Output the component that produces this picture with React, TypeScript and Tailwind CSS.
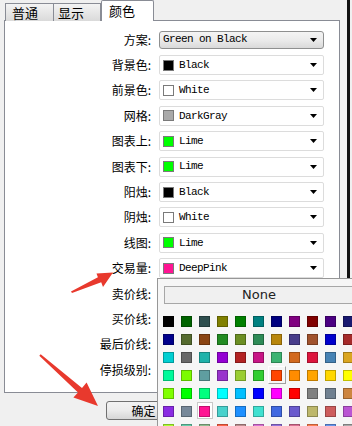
import React from "react";

const ROWS: { label: string; text: string; color?: string }[] = [
  { label: "方案", text: "Green on Black" },
  { label: "背景色", text: "Black", color: "#000000" },
  { label: "前景色", text: "White", color: "#ffffff" },
  { label: "网格", text: "DarkGray", color: "#a9a9a9" },
  { label: "图表上", text: "Lime", color: "#00ff00" },
  { label: "图表下", text: "Lime", color: "#00ff00" },
  { label: "阳烛", text: "Black", color: "#000000" },
  { label: "阴烛", text: "White", color: "#ffffff" },
  { label: "线图", text: "Lime", color: "#00ff00" },
  { label: "交易量", text: "DeepPink", color: "#ff1493" },
  { label: "卖价线", text: "Red", color: "#ff0000" },
  { label: "买价线", text: "Blue", color: "#0000ff" },
  { label: "最后价线", text: "Yellow", color: "#ffff00" },
  { label: "停损级别", text: "Gray", color: "#808080" },
];

// KnownColor palette, row by row
const SWATCHES = [
  ["#000000", "#006400", "#2F4F4F", "#808000", "#008000", "#008080", "#000080", "#800080", "#800000", "#4B0082", "#191970"],
  ["#00008B", "#556B2F", "#8B4513", "#228B22", "#6B8E23", "#2E8B57", "#B8860B", "#483D8B", "#A0522D", "#0000CD", "#A52A2A"],
  ["#00CED1", "#696969", "#20B2AA", "#9400D3", "#B22222", "#C71585", "#3CB371", "#D2691E", "#DC143C", "#4682B4", "#DAA520"],
  ["#00FA9A", "#7CFC00", "#5F9EA0", "#9932CC", "#9ACD32", "#32CD32", "#FF4500", "#FF8C00", "#FFA500", "#FFD700", "#FFFF00"],
  ["#7FFF00", "#00FF00", "#00FF7F", "#00FFFF", "#00BFFF", "#0000FF", "#FF00FF", "#FF0000", "#808080", "#708090", "#CD853F"],
  ["#8A2BE2", "#778899", "#FF1493", "#48D1CC", "#1E90FF", "#40E0D0", "#4169E1", "#6A5ACD", "#BDB76B", "#CD5C5C", "#BA55D3"],
  ["#ADFF2F", "#66CDAA", "#8FBC8F", "#FF6347", "#BC8F8F", "#DA70D6", "#9370DB", "#DB7093", "#FF7F50", "#6495ED", "#A9A9A9"],
];

function Arrow() {
  return (
    <svg width="7" height="4" viewBox="0 0 7 4" className="ml-auto mr-[6px] shrink-0">
      <polygon points="0,0 7,0 3.5,4" fill="#000" />
    </svg>
  );
}

function Combo({ text, color }: { text: string; color?: string }) {
  if (!color) {
    return (
      <div className="flex items-center w-[165px] h-[18px] rounded-[3px] border border-[#8e8f8f] bg-gradient-to-b from-[#f4f4f4] via-[#ebebeb] to-[#d9d9d9] pl-[3px]">
        <span className="font-['Liberation_Mono',monospace] text-[11px] tracking-[-0.6px] text-black">{text}</span>
        <Arrow />
      </div>
    );
  }
  return (
    <div className="flex items-center w-[165px] h-[20px] rounded-[2px] border border-[#dcdcdc] bg-white pl-[3px]">
      <div className="w-[11px] h-[11px] border border-[#7a7a7a] shrink-0" style={{ backgroundColor: color }} />
      <span className="ml-[5px] font-['Liberation_Mono',monospace] text-[11px] tracking-[-0.6px] text-black">{text}</span>
      <Arrow />
    </div>
  );
}

export default function App() {
  return (
    <div className="relative w-[352px] h-[426px] overflow-hidden bg-[#f0f0f0] font-['Noto_Sans_CJK_SC',sans-serif] text-black">
      <div className="flex h-full">
        {/* 主窗口 */}
        <div className="w-[340px] pl-[4px] flex flex-col">
          {/* 标签页 */}
          <div className="flex items-end h-[21px] -mb-px relative z-10 pl-[1px]">
            <div className="w-[49px] h-[18px] border border-b-0 border-[#898c95] bg-gradient-to-b from-[#f3f3f3] to-[#dadada] pl-[6px] text-[13px] leading-[17px]">
              普通
            </div>
            <div className="w-[47px] h-[18px] border border-b-0 border-l-0 border-[#898c95] bg-gradient-to-b from-[#f3f3f3] to-[#dadada] pl-[4px] text-[13px] leading-[17px]">
              显示
            </div>
            <div className="w-[53px] h-[21px] border border-b-0 border-[#898c95] rounded-t-[2px] bg-white pl-[7px] text-[13px] leading-[19px]">
              颜色
            </div>
          </div>

          {/* 面板 */}
          <div className="w-[336px] h-[373px] border border-[#898c95] bg-white pt-[6px]">
            {ROWS.map((r) => (
              <div key={r.label} className="flex items-center h-[25.4px]">
                <div className="w-[146px] text-right text-[12px] leading-none">{r.label}:</div>
                <div className="ml-[8px]">
                  <Combo text={r.text} color={r.color} />
                </div>
              </div>
            ))}
          </div>

          {/* 底部按钮 */}
          <div className="mt-[8px] ml-[102px] w-[75px] h-[19px] rounded-[3px] border border-[#707070] bg-gradient-to-b from-[#f2f2f2] via-[#ebebeb] to-[#d6d6d6] flex items-center justify-center text-[12px]">
            确定
          </div>
        </div>

        {/* 右侧黑条 */}
        <div className="ml-[7px] w-[3px] h-full bg-[#111]" />
      </div>

      {/* 颜色弹出框 */}
      <div className="absolute left-[157px] top-[278px] w-[202px] h-[160px] border border-[#979797] bg-[#f6f6f6] z-20">
        <div className="mt-[7px] ml-[6px] w-[190px] h-[18px] border border-[#a7a7a7] bg-[#f0f0f0] flex items-center justify-center font-['DejaVu_Sans',sans-serif] text-[13px] text-[#222]">
          None
        </div>
        <div className="mt-[9px] ml-[2px] flex flex-col">
          {SWATCHES.map((row, ri) => (
            <div key={ri} className="flex">
              {row.map((c, ci) => {
                const selected = ri === 5 && ci === 2;
                const hover = ri === 3 && ci === 6;
                return (
                  <div key={ci} className="w-[18px] h-[18px] shrink-0 relative">
                    {selected && (
                      <div className="absolute left-[1px] top-[-1px] w-[16px] h-[17px] bg-white border border-[#c8c8c8]" />
                    )}
                    {hover && (
                      <div className="absolute left-0 top-[-1px] w-[18px] h-[18px] border border-t-white border-l-white border-b-[#a0a0a0] border-r-[#a0a0a0]" />
                    )}
                    <div
                      className="absolute left-[3px] top-[3px] w-[11px] h-[11px] border border-black/25"
                      style={{ backgroundColor: c }}
                    />
                  </div>
                );
              })}
            </div>
          ))}
        </div>
      </div>

      {/* 红色箭头标注 */}
      <svg width="352" height="426" viewBox="0 0 352 426" className="absolute left-0 top-0 z-30 pointer-events-none">
        <polygon
          points="71,291.5 97.9,277.3 96.5,273.5 113,272.5 103,287 101.2,282.3 72,293"
          fill="#e8392d"
        />
        <polygon
          points="40.7,354.2 82,387.9 86.6,382.6 98,406 73.4,397.6 78,392.4 39.3,355.8"
          fill="#e8392d"
        />
      </svg>
    </div>
  );
}
